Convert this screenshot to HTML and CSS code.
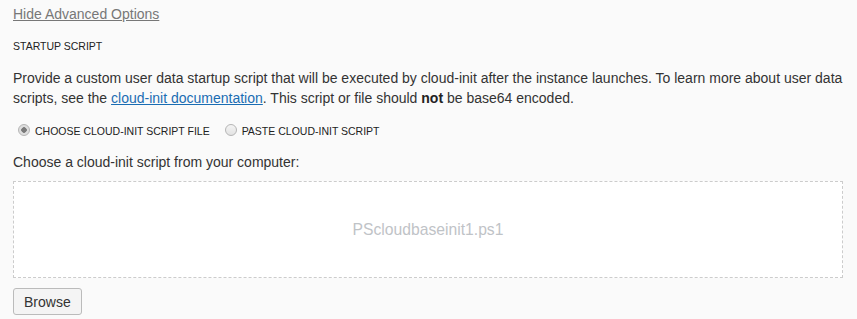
FILE: index.html
```html
<!DOCTYPE html>
<html lang="en">
  <head>
    <meta charset="UTF-8" />
    <meta name="viewport" content="width=device-width, initial-scale=1.0" />
    <title>Startup Script</title>
    <link rel="stylesheet" href="styles.css">
  </head>
  <body>
    <a class="toggle" href="#">Hide Advanced Options</a>

    <section class="startup">
      <h4 class="label">Startup Script</h4>
      <p class="help">
        Provide a custom user data startup script that will be executed by
        cloud-init after the instance launches. To learn more about user data
        scripts, see the <a href="#">cloud-init documentation</a>. This script
        or file should <strong>not</strong> be base64 encoded.
      </p>

      <div class="choices">
        <label class="choice">
          <input type="radio" name="source" checked />
          Choose cloud-init script file
        </label>
        <label class="choice">
          <input type="radio" name="source" />
          Paste cloud-init script
        </label>
      </div>

      <p class="prompt">Choose a cloud-init script from your computer:</p>
      <div class="dropzone">PScloudbaseinit1.ps1</div>
      <button class="browse" type="button">Browse</button>
    </section>
  </body>
</html>
```

FILE: styles.css
```css
body {
  font-family: "Liberation Sans", Arial, sans-serif;
  margin: 0;
  padding: 4px 14px 0 13px;
  background-color: #fafafa;
  color: #333;
  font-size: 14px;
  line-height: 20px;
}

.toggle {
  display: inline-block;
  color: #777;
  text-decoration: underline;
}

.label {
  margin: 14px 0 0;
  font-size: 10.5px;
  line-height: 16px;
  font-weight: normal;
  text-transform: uppercase;
  color: #222;
}

.help {
  margin: 14px 0 0;
}

.help a {
  color: #1a6db3;
}

.help strong {
  color: #222;
}

.choices {
  display: flex;
  gap: 15px;
  margin: 15px 0 0 5px;
  font-size: 10.5px;
  line-height: 16px;
  text-transform: uppercase;
  color: #222;
}

.choice {
  display: flex;
  align-items: center;
  gap: 5px;
}

.choice input {
  appearance: none;
  width: 12px;
  height: 12px;
  margin: 0 0 3px;
  border: 1px solid #b5b5b5;
  border-radius: 50%;
  background: linear-gradient(#f4f4f4, #e2e2e2);
}

.choice input:checked {
  background: radial-gradient(circle, #7a7a7a 0 2.5px, #dedede 3px 100%);
}

.prompt {
  margin: 13px 0 0;
}

.dropzone {
  margin-top: 9px;
  height: 95px;
  border: 1px dashed #ccc;
  background-color: #fff;
  display: flex;
  align-items: center;
  justify-content: center;
  font-size: 15.7px;
  color: #bfc3c7;
}

.browse {
  display: block;
  margin-top: 10px;
  height: 27px;
  padding: 0 10px;
  font-family: inherit;
  font-size: 14px;
  color: #333;
  background-color: #f4f4f4;
  border: 1px solid #bbb;
  border-radius: 3px;
}
```
